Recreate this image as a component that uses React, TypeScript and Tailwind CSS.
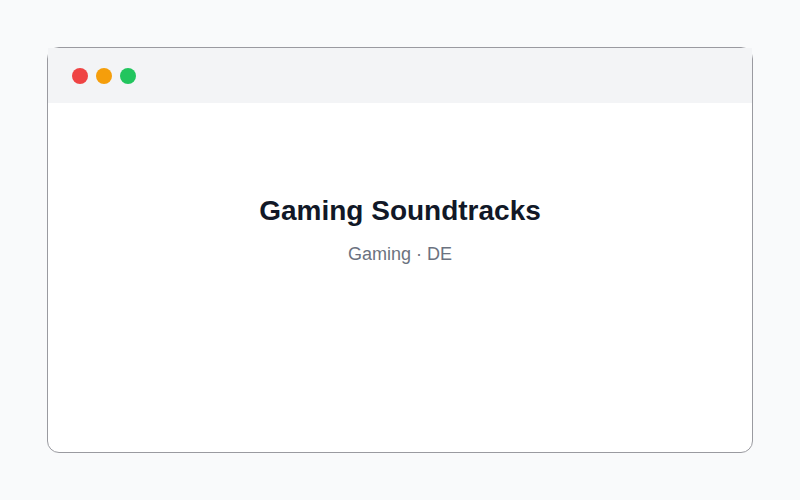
export default function App() {
  return (
    <div className="flex h-[500px] w-[800px] items-center justify-center bg-gray-50 font-['Liberation_Sans',Arial,sans-serif]">
      <div className="h-[406px] w-[706px] rounded-xl border border-[#9a9aa0] bg-white">
        <div className="flex h-[55px] items-center gap-2 bg-[#f3f4f6] px-6">
          <span className="h-4 w-4 rounded-full bg-[#ef4444]" />
          <span className="h-4 w-4 rounded-full bg-[#f59e0b]" />
          <span className="h-4 w-4 rounded-full bg-[#22c55e]" />
        </div>
        <div className="flex flex-col items-center pt-[90px]">
          <h1 className="text-[28px] font-bold leading-9 text-[#111827]">Gaming Soundtracks</h1>
          <p className="mt-[11px] text-lg leading-7 text-[#6b7280]">Gaming · DE</p>
        </div>
      </div>
    </div>
  );
}
